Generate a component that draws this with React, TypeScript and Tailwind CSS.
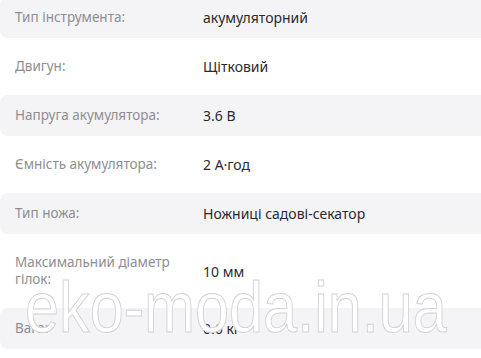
import React from "react";

interface SpecRow {
  label: string;
  value: string;
}

const SPECS: SpecRow[] = [
  { label: "Тип інструмента:", value: "акумуляторний" },
  { label: "Двигун:", value: "Щітковий" },
  { label: "Напруга акумулятора:", value: "3.6 В" },
  { label: "Ємність акумулятора:", value: "2 А·год" },
  { label: "Тип ножа:", value: "Ножниці садові-секатор" },
  { label: "Максимальний діаметр гілок:", value: "10 мм" },
  { label: "Вага:", value: "0.6 кг" },
];

const App: React.FC = () => {
  return (
    <div className="relative w-[481px] h-[358px] overflow-hidden bg-white font-['Noto_Sans',sans-serif] leading-[17px]">
      <div className="flex flex-col gap-2 -mt-[3px] w-[489px]">
        {SPECS.map((row, i) => (
          <div
            key={row.label}
            className={`flex items-center py-3 pl-[15px] rounded-lg ${
              i % 2 === 0 ? "bg-[#f4f4f6]" : "bg-white"
            }`}
          >
            <p className="w-[188px] shrink-0 pr-5 text-[13.5px] text-[#8e8e92]">{row.label}</p>
            <p className="text-[14px] text-[#2a2a2e]">{row.value}</p>
          </div>
        ))}
      </div>

      {/* watermark */}
      <div className="absolute left-[25px] top-[262px] pointer-events-none">
        <span className="inline-block origin-left scale-x-[0.85] font-['Liberation_Sans',sans-serif] text-[72px] leading-[90px] text-white [-webkit-text-stroke:1px_#d2d2d5] whitespace-nowrap">
          eko-moda.in.ua
        </span>
      </div>
    </div>
  );
};

export default App;
